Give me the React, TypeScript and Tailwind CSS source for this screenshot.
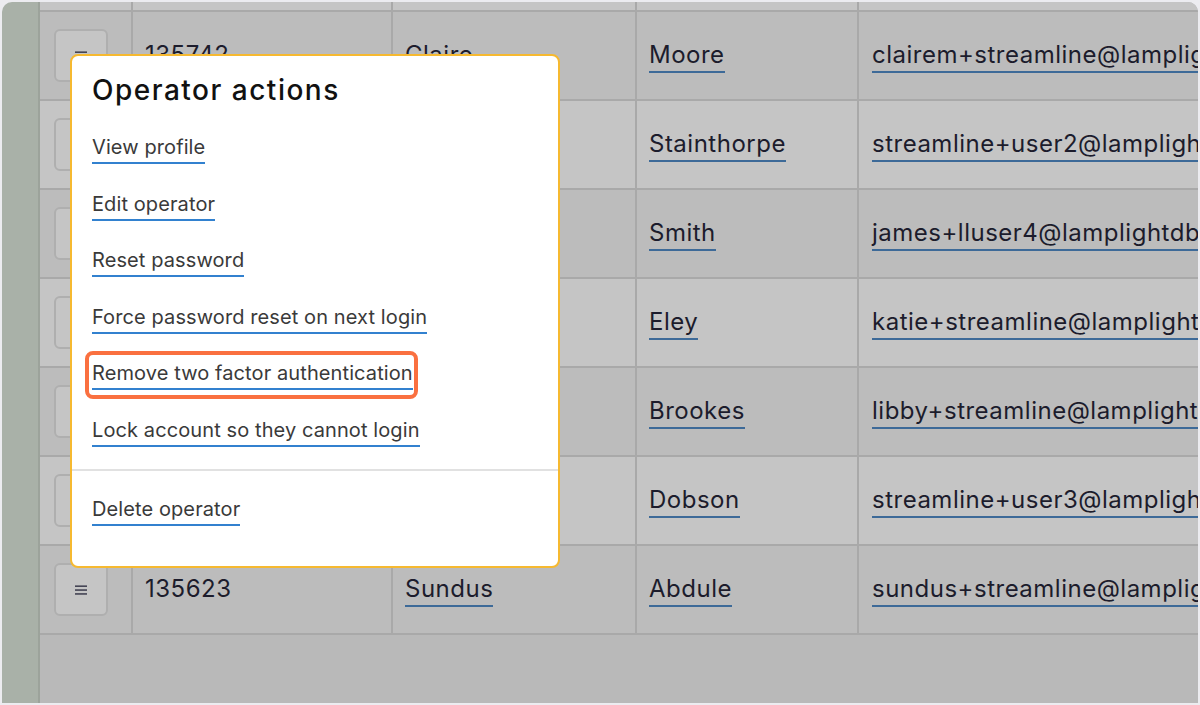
import React from 'react';

type Operator = {
  id: string;
  first: string;
  last: string;
  email: string;
};

const operators: Operator[] = [
  { id: '135742', first: 'Claire', last: 'Moore', email: 'clairem+streamline@lamplightdb.co.uk' },
  { id: '135744', first: 'Sam', last: 'Stainthorpe', email: 'streamline+user2@lamplightdb.co.uk' },
  { id: '135748', first: 'James', last: 'Smith', email: 'james+lluser4@lamplightdb.co.uk' },
  { id: '135751', first: 'Katie', last: 'Eley', email: 'katie+streamline@lamplightdb.co.uk' },
  { id: '135755', first: 'Libby', last: 'Brookes', email: 'libby+streamline@lamplightdb.co.uk' },
  { id: '135760', first: 'Tom', last: 'Dobson', email: 'streamline+user3@lamplightdb.co.uk' },
  { id: '135623', first: 'Sundus', last: 'Abdule', email: 'sundus+streamline@lamplightdb.co.uk' },
];

const actions = [
  'View profile',
  'Edit operator',
  'Reset password',
  'Force password reset on next login',
  'Remove two factor authentication',
  'Lock account so they cannot login',
];

const font = { fontFamily: 'Inter, "Noto Sans", sans-serif' };

const MenuIcon = () => (
  <svg width="12" height="12" viewBox="0 0 12 12" className="text-[#26263a]">
    <rect x="0" y="1.5" width="12" height="1.3" fill="currentColor" />
    <rect x="0" y="5.4" width="12" height="1.3" fill="currentColor" />
    <rect x="0" y="9.3" width="12" height="1.3" fill="currentColor" />
  </svg>
);

const TableLink: React.FC<{ children: React.ReactNode }> = ({ children }) => (
  <span className="inline-block whitespace-nowrap pt-[3px]">
    <span className="block border-b-2 border-[#3d6a98] pb-[2px] leading-[28px] text-[#1c1c2c]">{children}</span>
  </span>
);

const Row: React.FC<{ op: Operator; index: number }> = ({ op, index }) => (
  <div
    className={
      'grid h-[89px] grid-cols-[93px_260px_244px_222px_1fr] border-t-2 border-[#a9a9a9] ' +
      (index % 2 === 0 ? 'bg-[#bcbcbc]' : 'bg-[#c5c5c5]')
    }
  >
    <div className="flex items-center border-r-2 border-[#a9a9a9] pl-[14px]">
      <button className="flex h-[53px] w-[54px] items-center justify-center rounded-md border-2 border-[#afafaf] bg-[#c5c5c5]">
        <MenuIcon />
      </button>
    </div>
    <div className="flex items-center border-r-2 border-[#a9a9a9] pl-[12px]">
      <span className="pt-[3px] pb-[4px] leading-[28px] text-[#1c1c2c]">{op.id}</span>
    </div>
    <div className="flex items-center border-r-2 border-[#a9a9a9] pl-[12px]">
      <TableLink>{op.first}</TableLink>
    </div>
    <div className="flex items-center border-r-2 border-[#a9a9a9] pl-[12px]">
      <TableLink>{op.last}</TableLink>
    </div>
    <div className="flex items-center overflow-hidden pl-[13px]">
      <TableLink>{op.email}</TableLink>
    </div>
  </div>
);

const App: React.FC = () => {
  return (
    <div className="h-[705px] w-[1200px] overflow-hidden bg-[#ececf0] p-[2px]" style={font}>
      <div className="relative flex h-full overflow-hidden rounded-t-[10px]">
        {/* sidebar */}
        <div className="w-[36px] shrink-0 bg-[#a9b1a8]" />
        <div className="w-[2px] shrink-0 bg-[#9ca39b]" />

        {/* table */}
        <div className="min-w-0 flex-1 bg-[#b9b9b9] text-[24px] tracking-[0.5px]">
          <div className="grid h-[8px] grid-cols-[93px_260px_244px_222px_1fr] bg-[#c5c5c5]">
            <div className="border-r-2 border-[#a9a9a9]" />
            <div className="border-r-2 border-[#a9a9a9]" />
            <div className="border-r-2 border-[#a9a9a9]" />
            <div className="border-r-2 border-[#a9a9a9]" />
            <div />
          </div>
          {operators.map((op, i) => (
            <Row key={op.id} op={op} index={i} />
          ))}
          <div className="border-t-2 border-[#a9a9a9]" />
        </div>

        {/* operator actions popover */}
        <div className="absolute left-[68px] top-[52px] w-[490px] rounded-lg border-2 border-[#f6b930] bg-white">
          <div className="px-[20px] pt-[17px] pb-[22px]">
            <h2 className="text-[28px] font-medium leading-[34px] tracking-[1.5px] text-[#111111]">Operator actions</h2>
            <ul className="mt-[27px] flex flex-col gap-[26.5px]">
              {actions.map((a) => (
                <li key={a} className="relative">
                  {a === 'Remove two factor authentication' && (
                    <span className="pointer-events-none absolute -left-[7px] -top-[9px] h-[48px] w-[333px] rounded-lg border-[4px] border-[#fa7040]" />
                  )}
                  <a className="inline-block whitespace-nowrap border-b-2 border-[#3281cf] pb-[2px] text-[20px] leading-[26px] tracking-[0.1px] text-[#3a3a3a]">
                    {a}
                  </a>
                </li>
              ))}
            </ul>
          </div>
          <div className="h-[2px] bg-[#e1e1e1]" />
          <div className="px-[20px] pt-[25px] pb-[40px]">
            <a className="inline-block border-b-2 border-[#3281cf] pb-[2px] text-[20px] leading-[26px] tracking-[0.1px] text-[#3a3a3a]">
              Delete operator
            </a>
          </div>
        </div>
      </div>
    </div>
  );
};

export default App;
